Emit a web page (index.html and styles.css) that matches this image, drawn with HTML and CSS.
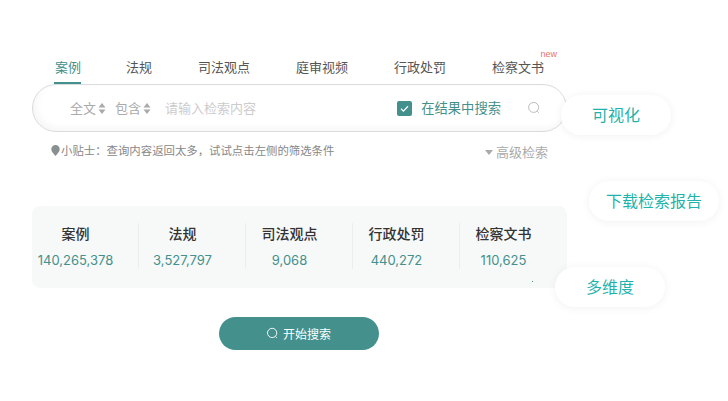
FILE: index.html
```html
<!DOCTYPE html>
<html lang="zh-CN">
<head>
  <meta charset="UTF-8">
  <title>检索</title>
  <meta name="viewport" content="width=device-width, initial-scale=1">
  <link rel="stylesheet" href="styles.css">
</head>
<body>
  <div class="page">
    <div class="tabs">
      <div class="tab active">案例</div>
      <div class="tab">法规</div>
      <div class="tab">司法观点</div>
      <div class="tab">庭审视频</div>
      <div class="tab">行政处罚</div>
      <div class="tab">检察文书<span class="new">new</span></div>
    </div>

    <div class="search">
      <span class="select">全文<svg class="updown" viewBox="0 0 8 11"><path d="M4 0l3.5 4.4h-7zM4 11L.5 6.6h7z"/></svg></span>
      <span class="select second">包含<svg class="updown" viewBox="0 0 8 11"><path d="M4 0l3.5 4.4h-7zM4 11L.5 6.6h7z"/></svg></span>
      <span class="placeholder">请输入检索内容</span>
      <span class="check"><svg viewBox="0 0 15 15"><path d="M4 7.8l2.4 2.3L11 5.2"/></svg></span>
      <span class="within">在结果中搜索</span>
      <svg class="search-icon" viewBox="0 0 14 14"><circle cx="6.6" cy="6.4" r="5"/><path d="M10.2 10.2l1.6 1.5"/></svg>
    </div>

    <div class="hints">
      <div class="tip">
        <svg class="pin" viewBox="0 0 9 11"><path d="M4.5 0a4.2 4.2 0 0 1 4.2 4.2c0 2.600-2.600 4.800-4.200 6.800C2.900 9 .3 6.800.3 4.200A4.200 4.200 0 0 1 4.500 0z"/></svg>
        小贴士：查询内容返回太多，试试点击左侧的筛选条件
      </div>
      <div class="advanced"><span class="caret"></span>高级检索</div>
    </div>

    <div class="stats">
      <div class="stat"><div class="stat-name">案例</div><div class="stat-num">140,265,378</div></div>
      <div class="stat"><div class="stat-name">法规</div><div class="stat-num">3,527,797</div></div>
      <div class="stat"><div class="stat-name">司法观点</div><div class="stat-num">9,068</div></div>
      <div class="stat"><div class="stat-name">行政处罚</div><div class="stat-num">440,272</div></div>
      <div class="stat"><div class="stat-name">检察文书</div><div class="stat-num">110,625</div></div>
    </div>

    <div class="start-wrap">
      <button class="start"><svg viewBox="0 0 14 14"><circle cx="6.6" cy="6.4" r="5"/><path d="M10.200 10.200l1.600 1.500"/></svg>开始搜索</button>
    </div>
  </div>

  <div class="pill pill-chart">可视化</div>
  <div class="pill pill-report">下载检索报告</div>
  <div class="pill pill-dim">多维度</div>
  <span class="speck"></span>
</body>
</html>
```

FILE: styles.css
```css
* { box-sizing: border-box; }
html, body { height: 100%; }
body {
  margin: 0;
  background: #fff;
  font-family: "Noto Sans CJK SC", "Noto Sans", sans-serif;
  overflow: hidden;
}
.page {
  width: 535px;
  margin-left: 32px;
  padding-top: 51px;
}

.tabs {
  display: flex;
  gap: 46px;
  padding-left: 22px;
  height: 33px;
}
.tab {
  position: relative;
  font-size: 13px;
  line-height: 32px;
  height: 33px;
  color: #555;
}
.tab.active {
  padding-left: 1px;
  margin-right: -1px;
  color: #43908c;
  border-bottom: 2px solid #43908c;
}
.new {
  position: absolute;
  top: -3px;
  right: -13px;
  font-family: "Liberation Sans", sans-serif;
  font-size: 9px;
  line-height: 12px;
  color: #e57373;
}

.search {
  display: flex;
  align-items: center;
  height: 48px;
  padding: 0 25px 0 37px;
  border: 1px solid #d9dcdc;
  border-radius: 24px;
  background: #fff;
  box-shadow: inset 3px -3px 7px #0000000a;
  font-size: 13px;
}
.select {
  display: flex;
  align-items: center;
  gap: 2px;
  margin-bottom: 2px;
  color: #aaa;
}
.second { margin-left: 9px; }
.updown {
  width: 8px;
  height: 11px;
  margin-top: 2px;
  fill: #aaa;
}
.placeholder {
  margin: 0 0 2px 14px;
  flex: 1;
  color: #ccc;
}
.check {
  width: 15px;
  height: 15px;
  border-radius: 2px;
  background: #43908c;
  margin-right: 9px;
}
.check svg {
  display: block;
  fill: none;
  stroke: #fff;
  stroke-width: 1.300;
}
.within {
  margin-bottom: 2px;
  font-size: 13.300px;
  color: #43908c;
}
.search-icon {
  width: 14px;
  height: 14px;
  margin-left: 26px;
  fill: none;
  stroke: #bbb;
  stroke-width: 1;
}

.hints {
  display: flex;
  justify-content: space-between;
  padding: 10px 19px 0 19px;
  height: 41px;
}
.tip {
  display: flex;
  align-items: flex-start;
  font-size: 11.400px;
  line-height: 17px;
  color: #888;
}
.pin {
  width: 9px;
  height: 11px;
  margin: 3px 1px 0 0;
  fill: #8a8f8f;
}
.advanced {
  display: flex;
  align-items: center;
  font-size: 13px;
  line-height: 20px;
  height: 20px;
  color: #aaa;
}
.caret {
  width: 0;
  height: 0;
  margin-right: 3px;
  border: 4px solid transparent;
  border-top: 5px solid #aaa;
  border-bottom: 0;
}

.stats {
  display: flex;
  height: 82px;
  margin-top: 33px;
  padding: 17px 0 19px;
  border-radius: 8px;
  background: #f7f9f9;
}
.stat {
  width: 107px;
  padding-right: 19px;
  border-left: 1px solid #ebeeee;
  text-align: center;
}
.stat:first-child {
  width: 106px;
  border-left: 0;
}
.stat-name {
  margin-top: -1px;
  font-size: 14px;
  font-weight: 500;
  line-height: 22px;
  color: #333;
}
.stat-num {
  margin-top: 6px;
  font-family: Inter, "Liberation Sans", sans-serif;
  font-size: 13px;
  line-height: 20px;
  color: #43908c;
  white-space: nowrap;
}

.start-wrap {
  display: flex;
  justify-content: center;
  padding: 29px 2px 0 0;
}
.start {
  display: flex;
  align-items: center;
  justify-content: center;
  gap: 4px;
  width: 160px;
  height: 33px;
  border: 0;
  border-radius: 17px;
  background: #43908c;
  color: #fff;
  font-family: inherit;
  font-size: 12px;
}
.start svg {
  width: 13px;
  height: 13px;
  fill: none;
  stroke: #fff;
  stroke-width: 1;
}

.pill {
  position: absolute;
  height: 40px;
  padding-bottom: 2px;
  border-radius: 20px;
  background: #fff;
  box-shadow: 0 1px 10px #0000000f;
  color: #1fb3ab;
  font-size: 16px;
  line-height: 38px;
  text-align: center;
}
.pill-chart { left: 561px; top: 95px; width: 110px; }
.pill-report { left: 589px; top: 181px; width: 130px; }
.pill-dim { left: 555px; top: 267px; width: 110px; }

.speck {
  position: absolute;
  left: 532px;
  top: 281px;
  width: 1px;
  height: 1px;
  background: #43908c;
}
```
